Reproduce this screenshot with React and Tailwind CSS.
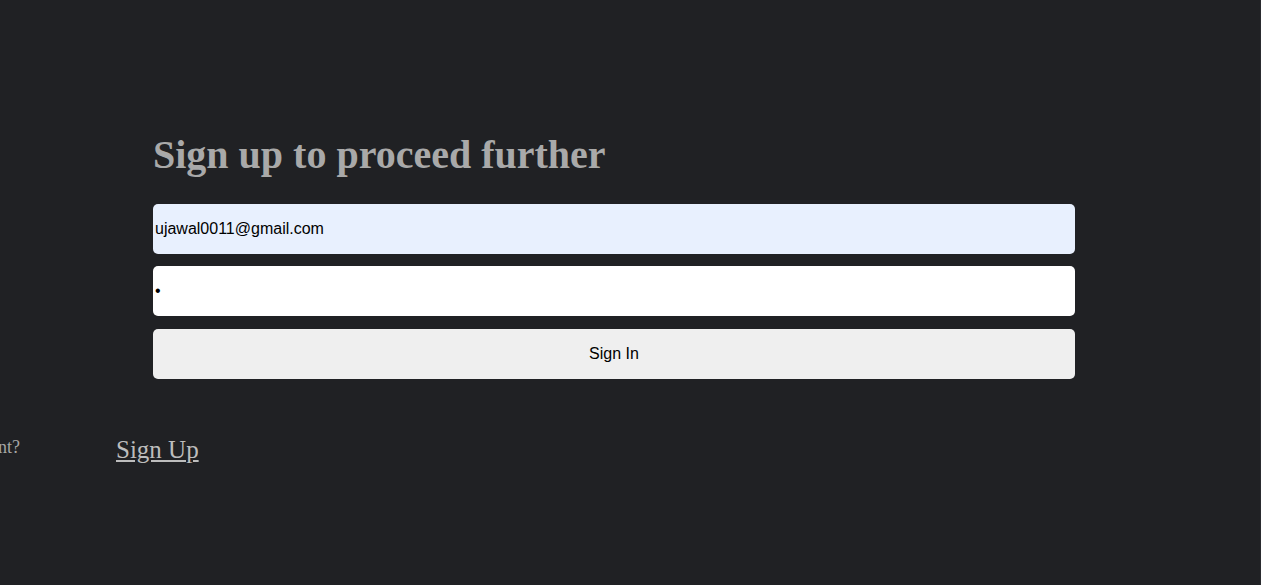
import React from 'react';

const App = () => {
    return (
        <div className="w-[1261px] h-[585px] bg-[#202124] overflow-hidden relative">
            <div className="pt-[133px] pl-[153px] w-[1075px]">
                <h1 className="text-[40px] leading-[44px] font-bold text-[#a9a9a9] [font-family:'Liberation_Serif',serif]">
                    Sign up to proceed further
                </h1>
                <form className="mt-[27px] flex flex-col [font-family:'Liberation_Sans',Arial,sans-serif]">
                    <input
                        type="email"
                        defaultValue="ujawal0011@gmail.com"
                        className="h-[50px] w-full rounded-[5px] bg-[#e8f0fe] px-[2px] text-[16px] text-black outline-none"
                    />
                    <input
                        type="password"
                        defaultValue="a"
                        className="mt-[12px] h-[50px] w-full rounded-[5px] bg-white px-[2px] text-[16px] text-black outline-none"
                    />
                    <button
                        type="button"
                        className="mt-[13px] h-[50px] w-full rounded-[5px] bg-[#efefef] text-[16px] text-black"
                    >
                        Sign In
                    </button>
                </form>
            </div>
            {/* the left text runs off the page edge in the reference */}
            <div className="mt-[52px] flex items-start [font-family:'Liberation_Serif',serif]">
                <div className="pt-[3px] w-[20px] flex justify-end whitespace-nowrap text-[18px] text-[#a6a6a6]">
                    Don't have an account?
                </div>
                <a href="#" className="ml-[96px] text-[25px] text-[#bdbdbd] underline">
                    Sign Up
                </a>
            </div>
            <div className="absolute right-0 top-0 h-full w-px bg-[#2a2b2f]" />
        </div>
    );
};

export default App;
